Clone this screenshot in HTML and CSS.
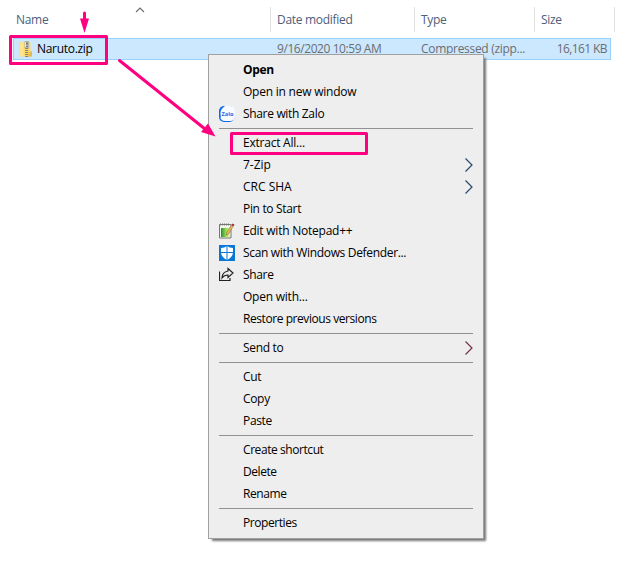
FILE: index.html
```html
<!DOCTYPE html>
<html lang="en">
<head>
<meta charset="utf-8">
<title>Explorer</title>
<link rel="stylesheet" href="styles.css">
</head>
<body>
<main class="window">
  <div class="header">
    <div class="col name">Name
      <svg class="sort" width="10" height="6" viewBox="0 0 10 6"><path d="M1 5 5 1l4 4" fill="none" stroke="#6b6b6b" stroke-width="1.1"/></svg>
    </div>
    <div class="col date">Date modified</div>
    <div class="col type">Type</div>
    <div class="col size">Size</div>
  </div>
  <div class="row">
    <div class="file">
      <svg width="14" height="16" viewBox="0 0 14 16">
        <path d="M0 1h11.500v9H13v5.500H0z" fill="#fbd969"/><path d="M.5 1.500h4v13.500h-4z" fill="#ffe591"/>
        <path d="M11 10.500h2v5H9z" fill="#e9b94c"/>
        <path d="M5.500 0H10v7H5.500z" fill="#b5b5ae"/><path d="M6 1h1v5H6z" fill="#e6e6df"/><path d="M7.500 1.500h1v2h-1zM7.500 5h1v1h-1z" fill="#464a4d"/>
        <path d="M7.700 7v9" stroke="#858171" stroke-width="3" stroke-dasharray="1 1"/>
      </svg>
      <span>Naruto.zip</span>
    </div>
    <div class="cell modified">9/16/2020 10:59 AM</div>
    <div class="cell kind">Compressed (zipp...</div>
    <div class="cell bytes">16,161 KB</div>
  </div>
  <nav class="menu">
    <div class="item"><span class="icon"></span><b>Open</b></div>
    <div class="item loose"><span class="icon"></span><span>Open in new window</span></div>
    <div class="item"><span class="icon"><svg width="16" height="16" viewBox="0 0 16 16"><rect width="15.500" height="16" rx="5" fill="#0868ee"/><path d="M6 0h5q5 0 5 5v5q0 5-5 5H6Q3 15 1.500 12.500 2 11 1.500 8 1 3 6 0z" fill="#f8fbff"/><text class="zalo" x="2.500" y="10" textLength="12" lengthAdjust="spacingAndGlyphs">Zalo</text></svg></span><span>Share with Zalo</span></div>
    <hr>
    <div class="item loose"><span class="icon"></span><span>Extract All...</span></div>
    <div class="item wide"><span class="icon"></span><span>7-Zip</span><svg class="chevron teal" width="8" height="14" viewBox="0 0 8 14"><path d="M.5.500 7 7 .5 13.500"/></svg></div>
    <div class="item wide"><span class="icon"></span><span>CRC SHA</span><svg class="chevron teal" width="8" height="14" viewBox="0 0 8 14"><path d="M.5.500 7 7 .5 13.500"/></svg></div>
    <div class="item"><span class="icon"></span><span>Pin to Start</span></div>
    <div class="item loose"><span class="icon"><svg width="16" height="16" viewBox="0 0 16 16">
      <defs><linearGradient id="leaf" x2="1"><stop stop-color="#248d32"/><stop offset=".5" stop-color="#8ed84c"/><stop offset="1" stop-color="#e9f7a8"/></linearGradient></defs>
      <path d="M.5 1.500h11.500v13.500H.5z" fill="#f7f7f2" stroke="#77776f"/><path d="M1 1.500h10" stroke="#77776f" stroke-width="2" stroke-dasharray="1 1"/><path d="M2 5h9v9H2z" fill="url(#leaf)"/><path d="m7 12 1-3 4.500-7 1.700 1.200L9.500 11z" fill="#f2b74e" stroke="#75633d" stroke-width=".5"/><path d="m12.500 2 1-1.500 2 1.200-1 1.500z" fill="#9d2525"/></svg></span><span>Edit with Notepad++</span></div>
    <div class="item"><span class="icon"><svg width="16" height="16" viewBox="0 0 16 16"><path fill="#0877d7" d="M0 0h16v16H0z"/><path d="M8 1q2.500 2 6 2v4q0 5-6 8-6-3-6-8V3q3.500 0 6-2z" fill="#fff"/><path d="M8 1v14M2 7.500h12" stroke="#0877d7"/></svg></span><span>Scan with Windows Defender...</span></div>
    <div class="item"><span class="icon"><svg width="16" height="16" viewBox="0 0 16 16"><path d="M.5 4.500v9H11V11M9 1.500 14 6l-5 4.500V8Q5 8 3 11q.2-6 6-7z" fill="none" stroke="#222" stroke-width="1.200"/></svg></span><span>Share</span></div>
    <div class="item loose"><span class="icon"></span><span>Open with...</span></div>
    <div class="item tight"><span class="icon"></span><span>Restore previous versions</span></div>
    <hr>
    <div class="item"><span class="icon"></span><span>Send to</span><svg class="chevron red" width="8" height="14" viewBox="0 0 8 14"><path d="M.5.500 7 7 .5 13.500"/></svg></div>
    <hr>
    <div class="item"><span class="icon"></span><span>Cut</span></div>
    <div class="item"><span class="icon"></span><span>Copy</span></div>
    <div class="item"><span class="icon"></span><span>Paste</span></div>
    <hr>
    <div class="item tight"><span class="icon"></span><span>Create shortcut</span></div>
    <div class="item tight"><span class="icon"></span><span>Delete</span></div>
    <div class="item tight"><span class="icon"></span><span>Rename</span></div>
    <hr>
    <div class="item tight"><span class="icon"></span><span>Properties</span></div>
  </nav>
  <svg class="marks" width="627" height="564" viewBox="0 0 627 564">
    <g fill="none" stroke="#ff0080" stroke-width="3" stroke-linejoin="round"><rect x="10.500" y="36.500" width="96" height="27"/><rect x="231.500" y="133.500" width="135" height="20"/><path d="M84.500 13v8M119.500 60.500 205 129" stroke-linecap="round"/></g>
    <path d="M80 18.500h9L84.500 33zM208 123.500l7.500 13-14.500-4.500z" fill="#ff0080"/>
  </svg>
</main>
</body>
</html>
```
FILE: styles.css
```css
* { box-sizing: border-box; }
body { margin: 0; background: #fff; font: 12px/16px "Open Sans", "Noto Sans", sans-serif; overflow: hidden; }
.window { position: relative; width: 627px; height: 564px; overflow: hidden; }
svg { display: block; flex: none; }
.header { display: flex; height: 38px; padding-top: 7px; color: #4c607a; }
.col { height: 25px; padding: 5px 0 0 6px; border-right: 1px solid #e2e2e2; letter-spacing: -.3px; }
.name { position: relative; width: 271px; padding-left: 16px; }
.date { width: 144px; }
.type { width: 120px; }
.size { width: 80px; }
.sort { position: absolute; left: 135px; top: 0; }
.row { display: grid; grid-template-columns: 263px 144px 120px 1fr; width: 598px; height: 22px; margin-left: 13px; border: 1px solid #99d1ff; background: #cce8ff; align-items: center; color: #6d6d6d; white-space: nowrap; letter-spacing: -.3px; }
.file { display: flex; align-items: center; gap: 4px; padding-left: 5px; color: #000; }
.modified { letter-spacing: -.43px; }
.bytes { text-align: right; padding-right: 3px; letter-spacing: -.6px; }
.menu { position: absolute; left: 208px; top: 54px; width: 276px; height: 485px; padding: 4px 10px; background: #eee; border: 1px solid #a0a0a0; box-shadow: 3px 3px 2px -1px #777; color: #000; white-space: nowrap; letter-spacing: -.33px; }
.item { display: flex; align-items: center; height: 22px; }
.loose { letter-spacing: -.23px; }
.wide { letter-spacing: 0; }
.tight { letter-spacing: -.43px; }
.icon { width: 24px; flex: none; }
.menu hr { height: 1px; margin: 3px 0; border: 0; background: #919191; }
.chevron { margin-left: auto; fill: none; stroke-width: 1.2; }
.teal { stroke: #26476f; }
.red { stroke: #713246; }
.zalo { font: bold 6px "Open Sans", sans-serif; letter-spacing: 0; fill: #176fe9; }
.marks { position: absolute; inset: 0; pointer-events: none; }
```
